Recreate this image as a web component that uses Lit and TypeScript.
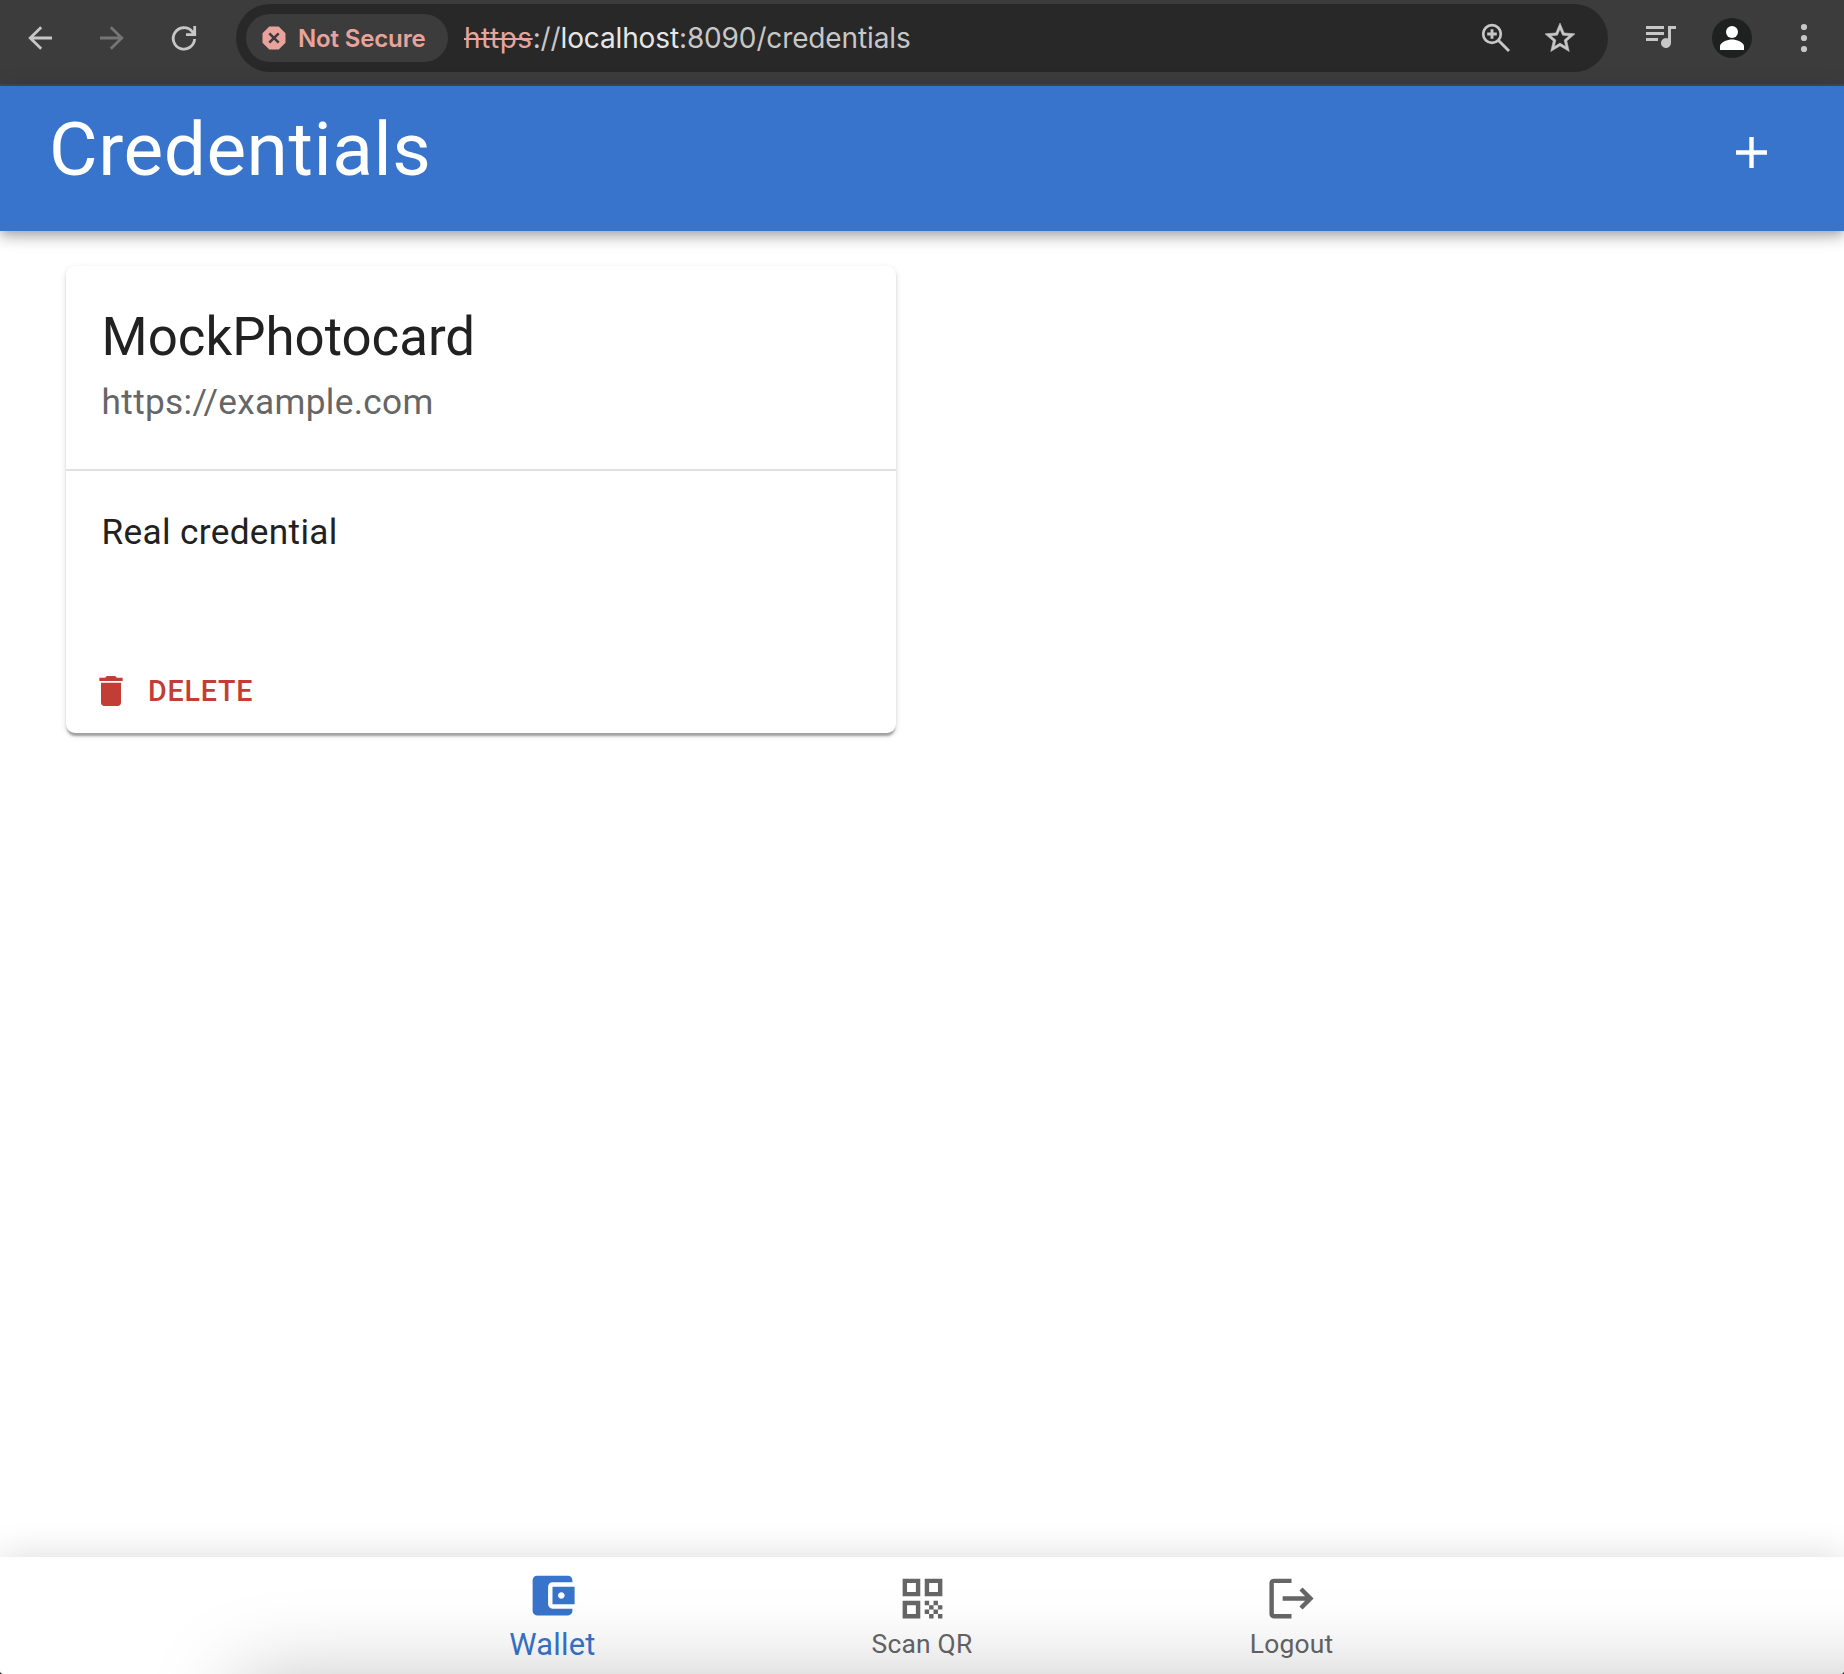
import { LitElement, html, css, svg } from "lit";
import { customElement } from "lit/decorators.js";

const shared = css`
  :host { display: block; box-sizing: border-box; }
  * { box-sizing: border-box; }
  svg { display: block; flex: none; fill: currentColor; }
`;

const icon = (size: number, body: unknown, box = "0 0 24 24") =>
  html`<svg width=${size} height=${size} viewBox=${box} aria-hidden="true">${body}</svg>`;

@customElement("browser-bar")
export class BrowserBar extends LitElement {
  static styles = [
    shared,
    css`
      :host { flex: none; }
      .bar {
        display: flex; align-items: center; height: 86px;
        background: #3c3c3c; border-bottom: 2px solid #474747;
        color: #c7c7c7; padding: 0 22px 8px 22px;
        font-family: Inter, "Liberation Sans", sans-serif;
      }
      .buttons { display: flex; gap: 36px; width: 214px; }
      .off { color: #757575; }
      .address {
        display: flex; align-items: center; width: 1372px; height: 68px;
        background: #282828; border-radius: 34px; padding: 0 30px 0 10px;
      }
      .chip {
        display: flex; align-items: center; width: 202px; height: 48px;
        border-radius: 24px; background: #3c3c3c; color: #e8a49c;
        padding-left: 15px; font-size: 24px; font-weight: 600;
      }
      .chip span { margin-left: 11px; letter-spacing: -0.15px; white-space: nowrap; }
      .url { margin-left: 16px; font-size: 28px; letter-spacing: -0.13px; white-space: nowrap; flex: 1; }
      .scheme { color: #e8a49c; letter-spacing: 0.5px; text-decoration: line-through; text-decoration-thickness: 2px; }
      .host { color: #e6e6e6; }
      .tools { display: flex; align-items: center; gap: 30px; }
      .right { display: flex; align-items: center; margin-left: 37px; }
      .avatar {
        display: grid; place-items: center; width: 40px; height: 40px;
        border-radius: 50%; background: #1f2120; color: #fff; margin: 0 34px 0 35px;
      }
    `,
  ];

  render() {
    const line = (d: string, w = 2.8) =>
      svg`<path d=${d} fill="none" stroke="currentColor" stroke-width=${w}></path>`;
    return html`
      <div class="bar">
        <div class="buttons">
          ${icon(36, line("M30 18H8M19.2 7.2L8.2 18l11 10.8"), "0 0 36 36")}
          <span class="off">${icon(36, line("M6 18h22M16.8 7.2L27.8 18l-11 10.8"), "0 0 36 36")}</span>
          ${icon(36, line("M28.6 19A10.7 10.7 0 1 1 26 11.4L28.6 14.6M28.7 6v8.7H20"), "0 0 36 36")}
        </div>
        <div class="address">
          <div class="chip">
            ${icon(26, svg`
              <path d="M8.3 1.5h9.4l6.8 6.8v9.4l-6.8 6.8H8.3L1.5 17.7V8.3z"></path>
              <path d="M8.3 8.3l9.4 9.4M17.7 8.3l-9.4 9.4" stroke="#3c3c3c" stroke-width="2.6"></path>`, "0 0 26 26")}
            <span>Not Secure</span>
          </div>
          <div class="url"><span class="scheme">https</span>://<span class="host">localhost</span>:8090/credentials</div>
          <div class="tools">
            ${icon(32, svg`
              <circle cx="12" cy="12" r="8.800" fill="none" stroke="currentColor" stroke-width="2.700"></circle>
              <path d="M12 7.200v9.600M7.200 12h9.600M18.300 18.300L29 29" fill="none" stroke="currentColor" stroke-width="2.900"></path>`, "0 0 32 32")}
            ${icon(36, svg`<path stroke="currentColor" stroke-width=".35" d="M22 9.24l-7.19-.62L12 2 9.19 8.63 2 9.24l5.46 4.73L5.82 21 12 17.27 18.18 21l-1.63-7.03L22 9.24zM12 15.4l-3.76 2.27 1-4.28-3.32-2.88 4.38-.38L12 6.1l1.71 4.04 4.38.38-3.32 2.88 1 4.28L12 15.4z"></path>`)}
          </div>
        </div>
        <div class="right">
          ${icon(32, svg`<path d="M1 4h18v3H1zM1 10h18v3H1zM1 16h12v3H1zM23 4h8v3h-5v14a5 5 0 1 1-3-4.600z"></path>`, "0 0 32 32")}
          <div class="avatar">${icon(36, svg`<circle cx="18" cy="12" r="6"></circle><path d="M6 30v-4c0-4 8-6.600 12-6.600s12 2.600 12 6.600v4z"></path>`, "0 0 36 36")}</div>
          ${icon(36, svg`<circle cx="18" cy="7" r="3.100"></circle><circle cx="18" cy="18" r="3.100"></circle><circle cx="18" cy="29" r="3.100"></circle>`, "0 0 36 36")}
        </div>
      </div>
    `;
  }
}

@customElement("credential-card")
export class CredentialCard extends LitElement {
  static styles = [
    shared,
    css`
      .card {
        width: 830px; height: 467px; border-radius: 9px; background: #fff; color: #212121;
        box-shadow: 0 4.4px 2.2px -2.2px rgba(0, 0, 0, 0.2), 0 2.2px 2.2px rgba(0, 0, 0, 0.14),
          0 2.2px 6.6px rgba(0, 0, 0, 0.12);
        display: flex; flex-direction: column;
      }
      .head { height: 205px; padding: 36px 35.6px 0; border-bottom: 2px solid #e0e0e0; }
      .title { font-size: 52.8px; line-height: 70.4px; }
      .issuer { margin-top: 4px; color: #666; }
      .issuer, .body { font-size: 35.2px; line-height: 52.8px; letter-spacing: 0.33px; }
      .body { flex: 1; padding: 35px 35.6px 0; }
      .delete {
        display: flex; align-items: center; gap: 17px; height: 66px; margin: 0 0 9px 25px;
        color: #c23d35; font-size: 28.6px; font-weight: 500; letter-spacing: 0.82px;
      }
    `,
  ];

  render() {
    return html`
      <div class="card">
        <div class="head">
          <div class="title">MockPhotocard</div>
          <div class="issuer">https://example.com</div>
        </div>
        <div class="body">Real credential</div>
        <div class="delete">
          ${icon(40, svg`<path d="M6 19c0 1.100.9 2 2 2h8c1.100 0 2-.9 2-2V7H6v12zM19 4h-3.500l-1-1h-5l-1 1H5v2h14V4z"></path>`)}
          <span>DELETE</span>
        </div>
      </div>
    `;
  }
}

@customElement("bottom-nav")
export class BottomNav extends LitElement {
  static styles = [
    shared,
    css`
      :host { flex: none; }
      .nav {
        display: flex; justify-content: center; height: 117px; background: #fff; color: #666;
        box-shadow: 0 0 36px rgba(0, 0, 0, 0.15);
      }
      .item {
        display: flex; flex-direction: column; align-items: center; width: 369.6px;
        padding-top: 15px; font-size: 26.4px; line-height: 40px; letter-spacing: 0.2px;
      }
      .item svg { margin-bottom: -1px; }
      .active { padding-top: 12px; color: #3874cb; font-size: 30.8px; line-height: 47px; }
    `,
  ];

  render() {
    return html`
      <div class="nav">
        <div class="item active">
          ${icon(53, svg`<path d="M21 18v1c0 1.100-.9 2-2 2H5c-1.110 0-2-.9-2-2V5c0-1.100.89-2 2-2h14c1.100 0 2 .9 2 2v1h-9c-1.110 0-2 .9-2 2v8c0 1.100.89 2 2 2h9zm-9-2h10V8H12v8zm4-2.500c-.83 0-1.500-.67-1.500-1.500s.67-1.500 1.500-1.500 1.500.67 1.500 1.500-.67 1.500-1.500 1.500z"></path>`)}
          <span>Wallet</span>
        </div>
        <div class="item">
          ${icon(53, svg`<path d="M3 11h8V3H3v8zm2-6h4v4H5V5zM3 21h8v-8H3v8zm2-6h4v4H5v-4zM13 3v8h8V3h-8zm6 6h-4V5h4v4zM19 19h2v2h-2zM13 13h2v2h-2zM15 15h2v2h-2zM13 17h2v2h-2zM15 19h2v2h-2zM17 17h2v2h-2zM17 13h2v2h-2zM19 15h2v2h-2z"></path>`)}
          <span>Scan QR</span>
        </div>
        <div class="item">
          ${icon(53, svg`<path d="M17 7l-1.410 1.410L18.170 11H8v2h10.170l-2.580 2.580L17 17l5-5zM4 5h8V3H4c-1.100 0-2 .9-2 2v14c0 1.100.9 2 2 2h8v-2H4V5z"></path>`)}
          <span>Logout</span>
        </div>
      </div>
    `;
  }
}

@customElement("app-root")
export class AppRoot extends LitElement {
  static styles = [
    shared,
    css`
      :host { background: #222; }
      .page {
        position: relative; display: flex; flex-direction: column; height: 1674px; overflow: hidden;
        background: #fff; border-radius: 0 0 4px 4px; font-family: Roboto, sans-serif;
      }
      .header {
        flex: none; display: flex; justify-content: space-between; height: 145px;
        padding: 18px 66px 0 49px; background: #3874cb; color: #fff;
        box-shadow: 0 4.4px 8.8px -2.2px rgba(0, 0, 0, 0.2), 0 8.8px 11px rgba(0, 0, 0, 0.14),
          0 2.2px 22px rgba(0, 0, 0, 0.12);
      }
      .heading { font-size: 74.8px; line-height: 92.4px; letter-spacing: 0.55px; }
      .header svg { margin-top: 22px; }
      .content { flex: 1; padding: 35px 66px; }
      .shade {
        position: absolute; left: 240px; right: -200px; top: 1684px; height: 200px;
        box-shadow: 0 0 90px rgba(0, 0, 0, 0.27); pointer-events: none;
      }
    `,
  ];

  render() {
    return html`
      <div class="page">
        <browser-bar></browser-bar>
        <div class="header">
          <div class="heading">Credentials</div>
          ${icon(53, svg`<path d="M19 13h-6v6h-2v-6H5v-2h6V5h2v6h6v2z"></path>`)}
        </div>
        <div class="content"><credential-card></credential-card></div>
        <bottom-nav></bottom-nav>
        <div class="shade"></div>
      </div>
    `;
  }
}
